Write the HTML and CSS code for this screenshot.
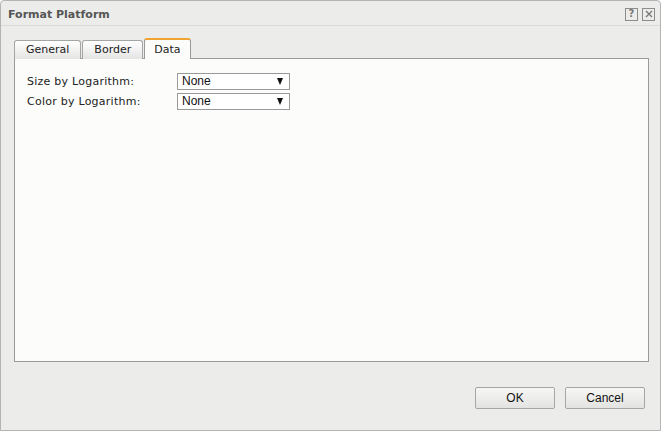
FILE: index.html
```html
<!DOCTYPE html>
<html>
	<head>
		<meta charset="UTF-8">
		<title>Format Platform</title>
		<link rel="stylesheet" href="styles.css">
	</head>
	<body>
		<div class="dialog">
			<div class="titleBar">
				<span class="title">Format Platform</span>
				<div class="tools">
					<span class="toolBtn">?</span>
					<span class="toolBtn">
						<svg width="8" height="8" viewBox="0 0 8 8"><path d="M1 1L7 7M7 1L1 7" stroke="#777" stroke-width="1.3" fill="none"/></svg>
					</span>
				</div>
			</div>
			<div class="content">
				<div class="tabs">
					<div class="tab">General</div>
					<div class="tab">Border</div>
					<div class="tab active">Data</div>
				</div>
				<div class="panel">
					<div class="row">
						<span class="label">Size by Logarithm:</span>
						<div class="select"><span>None</span><i class="arrow"></i></div>
					</div>
					<div class="row">
						<span class="label">Color by Logarithm:</span>
						<div class="select"><span>None</span><i class="arrow"></i></div>
					</div>
				</div>
				<div class="buttons">
					<div class="btn">OK</div>
					<div class="btn">Cancel</div>
				</div>
			</div>
		</div>
	</body>
</html>
```

FILE: styles.css
```css
*{
	margin: 0;
	padding: 0;
	box-sizing: border-box;
}
body{
	font-family: "DejaVu Sans", Verdana, sans-serif;
	font-size: 11px;
	color: #222;
	background: #fff;
}
.dialog{
	width: 661px;
	height: 431px;
	background-color: #ecedeb;
	border: 1px solid #b4b4b4;
	border-radius: 4px 4px 0 0;
	display: flex;
	flex-direction: column;
}
.titleBar{
	height: 25px;
	border-bottom: 1px solid #d9dad8;
	display: flex;
	align-items: center;
	justify-content: space-between;
	padding: 0 5px 0 7px;
}
.title{
	font-weight: bold;
	font-size: 11px;
	color: #555;
	margin-top: 2px;
}
.tools{
	display: flex;
	gap: 4px;
	margin-top: 2px;
}
.toolBtn{
	width: 13px;
	height: 13px;
	border: 1px solid #8c8c8c;
	display: flex;
	align-items: center;
	justify-content: center;
	font-size: 10px;
	font-weight: bold;
	color: #777;
	line-height: 1;
}
.content{
	flex: 1;
	display: flex;
	flex-direction: column;
	padding: 12px 11px 0 13px;
}
.tabs{
	display: flex;
	align-items: flex-end;
	gap: 1px;
	height: 21px;
	margin-bottom: -1px;
	position: relative;
	z-index: 1;
}
.tab{
	height: 19px;
	padding: 0 11px;
	border: 1px solid #a3a6a3;
	border-bottom: none;
	border-radius: 3px 3px 0 0;
	background: linear-gradient(#ffffff, #e4e5e3);
	line-height: 18px;
	color: #222;
}
.tab.active{
	height: 21px;
	padding: 0 9px;
	border-top: 2px solid #f0a232;
	border-left-color: #999;
	border-right-color: #999;
	background: #fcfdfb;
	line-height: 20px;
}
.panel{
	height: 304px;
	background-color: #fcfdfb;
	border: 1px solid #999b99;
	padding: 12px 12px;
}
.row{
	display: flex;
	align-items: center;
	height: 20px;
}
.label{
	width: 150px;
	letter-spacing: 0.25px;
}
.select{
	width: 113px;
	height: 17px;
	border: 1px solid #999;
	background: #fff;
	display: flex;
	align-items: center;
	justify-content: space-between;
	padding: 0 4px 0 4px;
	font-family: "Liberation Sans", Arial, sans-serif;
	font-size: 12px;
	color: #111;
}
.arrow{
	width: 0;
	height: 0;
	border-left: 3.5px solid transparent;
	border-right: 3.5px solid transparent;
	border-top: 7px solid #111;
	margin-right: 2px;
}
.buttons{
	display: flex;
	justify-content: flex-end;
	gap: 10px;
	padding: 25px 4px 0 0;
}
.btn{
	width: 80px;
	height: 22px;
	border: 1px solid #a6a6a6;
	border-radius: 2px;
	background: linear-gradient(#f6f6f5, #e3e4e2);
	text-align: center;
	line-height: 20px;
	font-family: "Liberation Sans", Arial, sans-serif;
	font-size: 12px;
	color: #111;
}
```
